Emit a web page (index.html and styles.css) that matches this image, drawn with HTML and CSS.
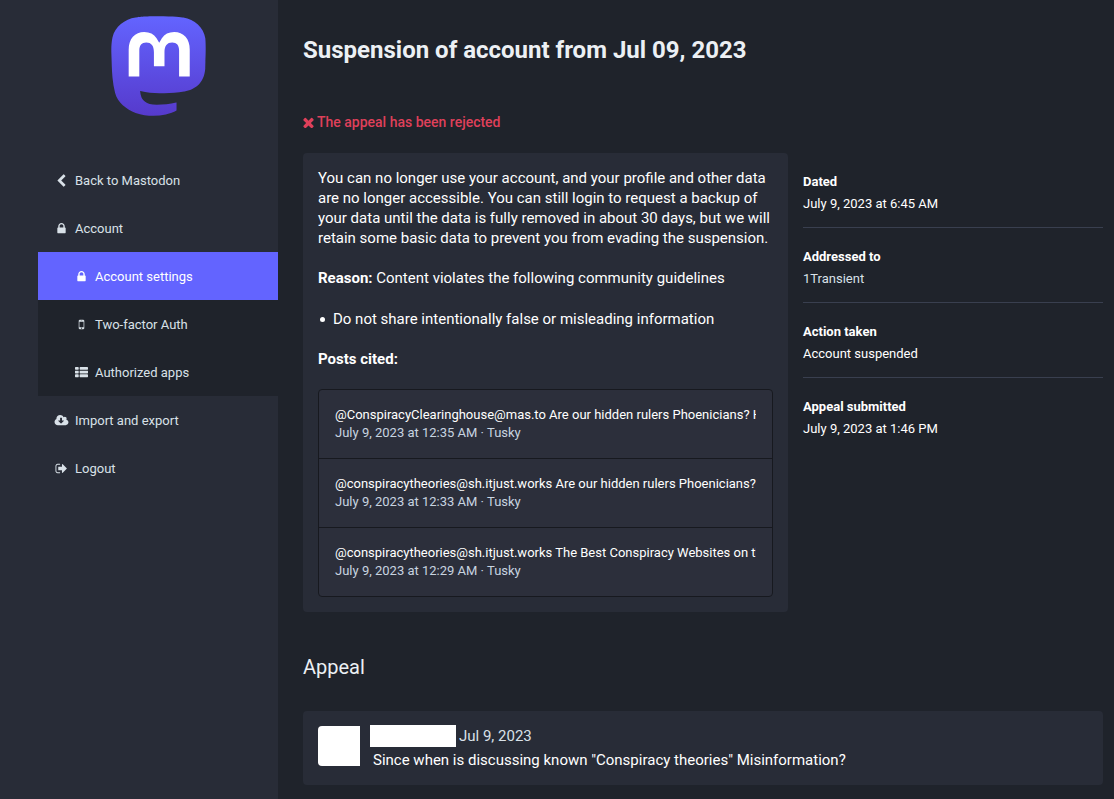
FILE: index.html
```html
<!DOCTYPE html>
<html lang="en">
<head>
<meta charset="utf-8">
<title>Suspension of account from Jul 09, 2023</title>
<link rel="stylesheet" href="styles.css">
</head>
<body>
<div class="layout">
  <aside class="sidebar">
    <div class="logo-wrap">
      <svg class="logo" viewBox="0 0 79 75" aria-hidden="true">
        <defs><linearGradient id="lg" x1="0" y1="0" x2="0" y2="1"><stop offset="0" stop-color="#6364ff"/><stop offset="1" stop-color="#563acc"/></linearGradient></defs>
        <path fill="url(#lg)" d="M74.7135 16.6043C73.6199 8.54587 66.5351 2.19527 58.1366 0.964691C56.7196 0.756754 51.351 0 38.9148 0H38.822C26.3824 0 23.7135 0.756754 22.2966 0.964691C14.1319 2.16118 6.67571 7.86752 4.86669 16.0214C3.99657 20.0369 3.90371 24.4888 4.06535 28.5726C4.29578 34.4289 4.34049 40.275 4.877 46.1075C5.24791 49.9817 5.89495 53.8251 6.81328 57.6088C8.53288 64.5968 15.4938 70.4122 22.3138 72.7848C29.6155 75.259 37.468 75.6697 44.9919 73.971C45.8196 73.7801 46.6381 73.5586 47.4475 73.3063C49.2737 72.7302 51.4164 72.086 52.9915 70.9542C53.0131 70.9384 53.0308 70.9178 53.0433 70.8942C53.0558 70.8706 53.0628 70.8445 53.0637 70.8179V65.1661C53.0634 65.1412 53.0574 65.1167 53.0462 65.0944C53.035 65.0721 53.0189 65.0525 52.9992 65.0371C52.9794 65.0218 52.9564 65.011 52.9318 65.0056C52.9073 65.0002 52.8819 65.0003 52.8574 65.0059C48.0369 66.1472 43.0971 66.7193 38.141 66.7103C29.6118 66.7103 27.3178 62.6981 26.6609 61.0278C26.1329 59.5842 25.7976 58.0784 25.6636 56.5486C25.6622 56.5229 25.667 56.4973 25.6775 56.4738C25.688 56.4502 25.7039 56.4295 25.724 56.4132C25.7441 56.397 25.7678 56.3856 25.7931 56.3801C25.8185 56.3746 25.8448 56.3751 25.8699 56.3816C30.6101 57.5151 35.4693 58.0873 40.3455 58.0864C41.5183 58.0864 42.6876 58.0864 43.8604 58.0558C48.7647 57.919 53.9339 57.6701 58.7591 56.7361C58.8794 56.7123 58.9998 56.6918 59.103 56.6611C66.7139 55.2124 73.9569 50.665 74.6929 39.1501C74.7204 38.6967 74.7892 34.4016 74.7892 33.9312C74.7926 32.3325 75.3085 22.5901 74.7135 16.6043Z"/>
        <path fill="#fff" d="M62.9996 45.3371H54.9966V25.9069C54.9966 21.8163 53.277 19.7302 49.7793 19.7302C45.9343 19.7302 44.0083 22.1981 44.0083 27.0727V37.7082H36.0534V27.0727C36.0534 22.1981 34.124 19.7302 30.279 19.7302C26.8019 19.7302 25.0651 21.8163 25.0651 25.9069V45.3371H17.0656V25.3172C17.0656 21.2266 18.1191 17.9769 20.2262 15.568C22.3998 13.1648 25.2509 11.9308 28.7898 11.9308C32.8859 11.9308 35.9812 13.492 38.0447 16.6111L40.036 19.9245L42.0308 16.6111C44.0943 13.492 47.1896 11.9308 51.2857 11.9308C54.8212 11.9308 57.6723 13.1648 59.8459 15.568C61.9529 17.9746 63.0065 21.2243 63.0065 25.3172L62.9996 45.3371Z"/>
      </svg>
    </div>
    <nav class="nav">
      <a class="nav-item">
        <svg class="icon" viewBox="84 -18 1700 1700"><path d="M1427 301l-531 531 531 531q19 19 19 45t-19 45l-166 166q-19 19-45 19t-45-19l-742-742q-19-19-19-45t19-45l742-742q19-19 45-19t45 19l166 166q19 19 19 45t-19 45z"/></svg>
        <span>Back to Mastodon</span>
      </a>
      <a class="nav-item">
        <svg class="icon" viewBox="0 0 1792 1792"><path d="M640 768h512v-192q0-106-75-181t-181-75-181 75-75 181v192zm832 96v576q0 40-28 68t-68 28h-960q-40 0-68-28t-28-68v-576q0-40 28-68t68-28h32v-192q0-184 132-316t316-132 316 132 132 316v192h32q40 0 68 28t28 68z"/></svg>
        <span>Account</span>
      </a>
      <div class="subnav">
        <a class="nav-item sub active">
          <svg class="icon" viewBox="0 0 1792 1792"><path d="M640 768h512v-192q0-106-75-181t-181-75-181 75-75 181v192zm832 96v576q0 40-28 68t-68 28h-960q-40 0-68-28t-28-68v-576q0-40 28-68t68-28h32v-192q0-184 132-316t316-132 316 132 132 316v192h32q40 0 68 28t28 68z"/></svg>
          <span>Account settings</span>
        </a>
        <a class="nav-item sub">
          <svg class="icon" viewBox="0 0 1792 1792"><path d="M976 1408q0-33-23.5-56.5t-56.5-23.5-56.5 23.5-23.5 56.5 23.5 56.5 56.5 23.5 56.5-23.5 23.5-56.5zm208-160v-704q0-13-9.5-22.5t-22.5-9.5h-512q-13 0-22.5 9.5t-9.5 22.5v704q0 13 9.5 22.5t22.5 9.5h512q13 0 22.5-9.5t9.5-22.5zm-192-848q0-16-16-16h-160q-16 0-16 16t16 16h160q16 0 16-16zm288-16v1024q0 52-38 90t-90 38h-512q-52 0-90-38t-38-90v-1024q0-52 38-90t90-38h512q52 0 90 38t38 90z"/></svg>
          <span>Two-factor Auth</span>
        </a>
        <a class="nav-item sub">
          <svg class="icon" viewBox="0 0 1792 1792"><path d="M512 1248v192q0 40-28 68t-68 28h-320q-40 0-68-28t-28-68v-192q0-40 28-68t68-28h320q40 0 68 28t28 68zm0-512v192q0 40-28 68t-68 28h-320q-40 0-68-28t-28-68v-192q0-40 28-68t68-28h320q40 0 68 28t28 68zm1280 512v192q0 40-28 68t-68 28h-960q-40 0-68-28t-28-68v-192q0-40 28-68t68-28h960q40 0 68 28t28 68zm-1280-1024v192q0 40-28 68t-68 28h-320q-40 0-68-28t-28-68v-192q0-40 28-68t68-28h320q40 0 68 28t28 68zm1280 512v192q0 40-28 68t-68 28h-960q-40 0-68-28t-28-68v-192q0-40 28-68t68-28h960q40 0 68 28t28 68zm0-512v192q0 40-28 68t-68 28h-960q-40 0-68-28t-28-68v-192q0-40 28-68t68-28h960q40 0 68 28t28 68z"/></svg>
          <span>Authorized apps</span>
        </a>
      </div>
      <a class="nav-item">
        <svg class="icon" viewBox="64 0 1792 1792"><path d="M1280 928q0-14-9-23t-23-9h-224v-352q0-13-9.5-22.5t-22.5-9.5h-192q-13 0-22.5 9.5t-9.5 22.5v352h-224q-14 0-23 9t-9 23q0 12 10 24l352 352q9 9 23 9t23-9l351-351q11-13 11-25zm640 224q0 159-112.5 271.5t-271.5 112.5h-1088q-185 0-316.5-131.5t-131.5-316.5q0-130 70-240t188-165q-2-30-2-43 0-212 150-362t362-150q156 0 285.5 87t188.5 231q71-62 166-62 106 0 181 75t75 181q0 76-41 138 130 31 213.5 135.5t83.5 238.5z"/></svg>
        <span>Import and export</span>
      </a>
      <a class="nav-item">
        <svg class="icon" viewBox="0 0 1792 1792"><path d="M704 1440q0 4 1 20t.5 26.5-3 23.5-10 19.5-20.5 6.5h-320q-119 0-203.5-84.5t-84.5-203.5v-704q0-119 84.5-203.5t203.5-84.5h320q13 0 22.5 9.5t9.5 22.5q0 4 1 20t.5 26.5-3 23.5-10 19.5-20.5 6.5h-320q-66 0-113 47t-47 113v704q0 66 47 113t113 47h312l11.5 1 11.5 3 8 5.5 7 9 2 13.5zm928-544q0 26-19 45l-544 544q-19 19-45 19t-45-19-19-45v-288h-448q-26 0-45-19t-19-45v-384q0-26 19-45t45-19h448v-288q0-26 19-45t45-19 45 19l544 544q19 19 19 45z"/></svg>
        <span>Logout</span>
      </a>
    </nav>
  </aside>
  <main class="main">
    <h1 class="title">Suspension of account from Jul 09, 2023</h1>
    <p class="status">
      <svg class="status-icon" viewBox="302 266 1188 1260"><path d="M1490 1322q0 40-28 68l-136 136q-28 28-68 28t-68-28l-294-294-294 294q-28 28-68 28t-68-28l-136-136q-28-28-28-68t28-68l294-294-294-294q-28-28-28-68t28-68l136-136q28-28 68-28t68 28l294 294 294-294q28-28 68-28t68 28l136 136q28 28 28 68t-28 68l-294 294 294 294q28 28 28 68z"/></svg>
      <span>The appeal has been rejected</span>
    </p>
    <div class="strike">
      <section class="card">
        <p class="para">You can no longer use your account, and your profile and other data are no longer accessible. You can still login to request a backup of your data until the data is fully removed in about 30 days, but we will retain some basic data to prevent you from evading the suspension.</p>
        <p class="para para-reason"><strong>Reason:</strong> Content violates the following community guidelines</p>
        <ul class="rules"><li>Do not share intentionally false or misleading information</li></ul>
        <p class="para para-cited"><strong>Posts cited:</strong></p>
        <div class="posts">
          <article class="post">
            <div class="post-text">@ConspiracyClearinghouse@mas.to Are our hidden rulers Phoenicians? Hidden history and the secret origins</div>
            <div class="post-meta">July 9, 2023 at 12:35 AM · Tusky</div>
          </article>
          <article class="post">
            <div class="post-text">@conspiracytheories@sh.itjust.works Are our hidden rulers Phoenicians? Hidden history and the secret</div>
            <div class="post-meta">July 9, 2023 at 12:33 AM · Tusky</div>
          </article>
          <article class="post">
            <div class="post-text">@conspiracytheories@sh.itjust.works The Best Conspiracy Websites on the internet right now and beyond</div>
            <div class="post-meta">July 9, 2023 at 12:29 AM · Tusky</div>
          </article>
        </div>
      </section>
      <dl class="meta">
        <div class="meta-row"><dt>Dated</dt><dd>July 9, 2023 at 6:45 AM</dd></div>
        <div class="meta-row"><dt>Addressed to</dt><dd class="muted">1Transient</dd></div>
        <div class="meta-row"><dt>Action taken</dt><dd>Account suspended</dd></div>
        <div class="meta-row"><dt>Appeal submitted</dt><dd>July 9, 2023 at 1:46 PM</dd></div>
      </dl>
    </div>
    <h2 class="appeal-title">Appeal</h2>
    <section class="appeal">
      <div class="avatar"></div>
      <div class="appeal-body">
        <div class="appeal-head"><span class="name-block"></span><span class="appeal-date">Jul 9, 2023</span></div>
        <div class="appeal-text">Since when is discussing known "Conspiracy theories" Misinformation?</div>
      </div>
    </section>
  </main>
</div>
</body>
</html>
```
FILE: styles.css
```css
* { box-sizing: border-box; }
html, body { margin: 0; padding: 0; height: 100%; overflow: hidden; }
body {
  background: #1f232b;
  color: #fff;
  font-family: Roboto, "Liberation Sans", sans-serif;
  font-size: 14px;
}
.layout { display: flex; min-height: 799px; }
.sidebar { width: 278px; flex: none; background: #282c37; padding-left: 38px; }
.logo-wrap { height: 156px; padding-top: 16px; display: flex; justify-content: center; align-items: flex-start; }
.logo { width: 105px; height: 100px; display: block; }
.nav { display: flex; flex-direction: column; }
.nav-item {
  display: flex;
  align-items: center;
  height: 48px;
  padding: 1px 0 0 17px;
  color: #d9e1e8;
  font-size: 13px;
  line-height: 18px;
}
.nav-item.sub { padding-left: 37px; }
.nav-item.active { background: #6364ff; color: #fff; }
.icon { width: 13px; height: 13px; fill: currentColor; flex: none; margin-right: 7px; overflow: visible; }
.subnav { background: #1f232b; display: flex; flex-direction: column; }

.main { flex: 1; min-width: 0; padding: 0 11px 0 25px; }
.title { margin: 0; padding-top: 35px; font-size: 24px; line-height: 30px; font-weight: 700; color: #ecf0f4; }
.status { margin: 0; padding: 48px 0 22px; height: 88px; color: #df405a; font-size: 14px; font-weight: 500; line-height: 18px; display: flex; align-items: center; gap: 3px; }
.status-icon { width: 11px; height: 11px; fill: currentColor; flex: none; }
.strike { display: flex; align-items: flex-start; gap: 15px; }
.card { width: 485px; flex: none; background: #282c37; border-radius: 4px; padding: 15px; font-size: 15px; line-height: 20px; }
.para { margin: 0 0 20px; }
.para-reason { margin-bottom: 21px; }
.para strong { font-weight: 700; }
.rules { margin: 0 0 20px; padding: 0 0 0 15px; list-style: none; }
.rules li { position: relative; }
.rules li::before { content: ""; position: absolute; left: -13px; top: 8px; width: 5px; height: 5px; border-radius: 50%; background: #fff; }
.posts { border: 1px solid #17191f; border-radius: 4px; background: #2c2f3b; overflow: hidden; }
.post { padding: 16px; height: 69px; border-bottom: 1px solid #17191f; font-size: 13px; line-height: 18px; }
.post:last-child { border-bottom: 0; height: 68px; }
.post-text { white-space: nowrap; overflow: hidden; color: #fff; }
.post-meta { color: #c8d4e0; }
.meta { margin: 0; flex: 1; min-width: 0; }
.meta-row { height: 75px; border-bottom: 1px solid #393f4f; padding-top: 20px; font-size: 13px; line-height: 18px; }
.meta-row:last-child { border-bottom: 0; }
.meta dt { font-weight: 700; margin-bottom: 4px; }
.meta dd { margin: 0; }
.meta dd.muted { color: #d9e1e8; }
.appeal-title { margin: 0; padding-top: 43px; height: 99px; font-size: 20px; line-height: 24px; font-weight: 400; color: #ecf0f4; }
.appeal { display: flex; background: #282c37; border-radius: 4px; padding: 15px; gap: 10px; height: 74px; }
.avatar { width: 42px; height: 40px; background: #fff; border-radius: 4px 0 0 4px; flex: none; }
.appeal-body { min-width: 0; }
.appeal-head { display: flex; align-items: center; height: 22px; margin-top: -1px; }
.name-block { width: 86px; height: 22px; background: #fff; margin-right: 3px; }
.appeal-date { color: #d9e1e8; font-size: 15px; }
.appeal-text { padding: 1px 0 0 3px; font-size: 15px; line-height: 24px; }
```
